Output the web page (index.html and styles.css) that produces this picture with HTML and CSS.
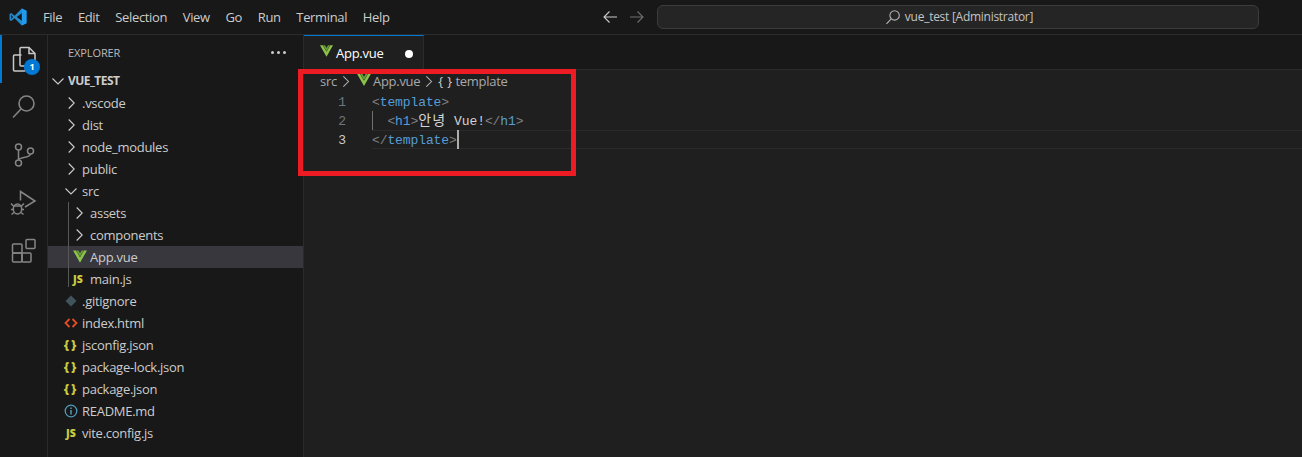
FILE: index.html
```
<!DOCTYPE html>
<html lang="en">
<head>
<meta charset="utf-8">
<title>App.vue - vue_test</title>
<link rel="stylesheet" href="styles.css">
</head>
<body>
<svg width="0" height="0" class="defs">
  <defs>
    <symbol id="vue" viewBox="0 0 16 14"><path d="M0 0h3.400L8 8 12.600 0H16L8 14z" fill="#8bc34a"/><path d="M3.800 0h2.400L8 3.200 9.800 0h2.400L8 7.200z" fill="#689f38"/></symbol>
    <symbol id="chev-r" viewBox="0 0 16 16"><path d="M5.700 2.500 11.200 8l-5.500 5.500" fill="none" stroke="currentColor" stroke-width="1.100"/></symbol>
    <symbol id="chev-d" viewBox="0 0 16 16"><path d="M2.500 5.500 8 11l5.500-5.500" fill="none" stroke="currentColor" stroke-width="1.100"/></symbol>
  </defs>
</svg>
<div class="window">
  <header class="titlebar">
    <svg class="logo" width="18" height="18" viewBox="0 0 100 100"><path d="M71 3 31 43 12 28 3 33v34l9 5 19-15 40 40 26-12V15z" fill="#2489ca"/><path d="M73 28 43 50l30 22z" fill="#161616"/><path d="M71 3 97 15v70L71 97z" fill="#1f9cf0"/><path d="M12 36 22 50 12 64z" fill="#161616"/></svg>
    <nav class="menu">
      <span>File</span><span>Edit</span><span>Selection</span><span>View</span><span>Go</span><span>Run</span><span>Terminal</span><span>Help</span>
    </nav>
    <div class="nav-arrows">
      <svg width="16" height="16" viewBox="0 0 16 16"><path d="M7.500 2.500 2 8l5.500 5.500M2 8h13" fill="none" stroke="#cccccc" stroke-width="1.100"/></svg>
      <svg width="16" height="16" viewBox="0 0 16 16"><path d="M8.500 2.500 14 8l-5.500 5.500M14 8H1" fill="none" stroke="#6e6e6e" stroke-width="1.100"/></svg>
    </div>
    <div class="command">
      <svg width="16" height="16" viewBox="0 0 16 16"><circle cx="9.600" cy="6.400" r="4.700" fill="none" stroke="#b0b0b0" stroke-width="1.100"/><path d="M6.200 9.800 1.500 14.800" stroke="#b0b0b0" stroke-width="1.200"/></svg>
      <span>vue_test [Administrator]</span>
    </div>
  </header>
  <div class="main">
    <aside class="activity">
      <div class="act act-on">
        <svg width="30" height="30" viewBox="0 0 30 30" fill="none" stroke="#c8c8c8" stroke-width="1.500"><path d="M12.500 11H5.500q-1 0-1 1v14q0 1 1 1h10q1 0 1-1v-4"/><path d="M11 4.500q0-1 1-1h8l6 6v11.500q0 1-1 1H12q-1 0-1-1z"/><path d="M20 3.500v6h6"/></svg>
        <span class="badge">1</span>
      </div>
      <div class="act">
        <svg width="26" height="26" viewBox="0 0 26 26" fill="none" stroke="#858585" stroke-width="1.600"><circle cx="15.500" cy="9.500" r="7.500"/><path d="M10 15 2 23.500"/></svg>
      </div>
      <div class="act">
        <svg width="26" height="26" viewBox="0 0 26 26" fill="none" stroke="#858585" stroke-width="1.500"><circle cx="7.500" cy="5" r="3"/><circle cx="7.500" cy="21" r="3"/><circle cx="19.500" cy="9" r="3"/><path d="M7.500 8v10M19.500 12c0 4-12 3-12 6"/></svg>
      </div>
      <div class="act">
        <svg width="28" height="28" viewBox="0 0 28 28" fill="none" stroke="#858585" stroke-width="1.500"><path d="M10.500 11.500V2.500L25 12l-10 6"/><ellipse cx="7.500" cy="20" rx="4.200" ry="5"/><path d="M3.500 17h8M1 14.500l2.500 2.500M14 14.500 11.500 17M1 20.500h2.500M11.500 20.500H14M1.500 25.500l2.500-2M13.500 25.500l-2.500-2"/></svg>
      </div>
      <div class="act">
        <svg width="26" height="26" viewBox="0 0 26 26" fill="none" stroke="#858585" stroke-width="1.500"><rect x="1.500" y="6" width="9.500" height="9" rx="1"/><rect x="1.500" y="15" width="9.500" height="9" rx="1"/><rect x="11" y="15" width="9" height="9" rx="1"/><rect x="15" y="1.500" width="9" height="9" rx="1"/></svg>
      </div>
    </aside>
    <aside class="sidebar">
      <div class="side-head"><span>EXPLORER</span><span class="dots"><i></i><i></i><i></i></span></div>
      <div class="row root"><svg class="tw"><use href="#chev-d"/></svg><b>VUE_TEST</b></div>
      <div class="row"><svg class="tw"><use href="#chev-r"/></svg>.vscode</div>
      <div class="row"><svg class="tw"><use href="#chev-r"/></svg>dist</div>
      <div class="row"><svg class="tw"><use href="#chev-r"/></svg>node_modules</div>
      <div class="row"><svg class="tw"><use href="#chev-r"/></svg>public</div>
      <div class="row"><svg class="tw"><use href="#chev-d"/></svg>src</div>
      <div class="nested">
        <div class="row"><svg class="tw"><use href="#chev-r"/></svg>assets</div>
        <div class="row"><svg class="tw"><use href="#chev-r"/></svg>components</div>
        <div class="row selected"><svg class="tw vue-i"><use href="#vue"/></svg>App.vue</div>
        <div class="row"><span class="fi js">JS</span>main.js</div>
      </div>
      <div class="row"><svg class="tw" viewBox="0 0 16 16"><path d="M2.500 8 8 2.500 13.500 8 8 13.500z" fill="#41535b"/></svg>.gitignore</div>
      <div class="row"><svg class="tw" viewBox="0 0 16 16"><path d="M6.500 4 2.500 8l4 4M9.500 4l4 4-4 4" fill="none" stroke="#e44d26" stroke-width="1.800"/></svg>index.html</div>
      <div class="row"><span class="fi json">{ }</span>jsconfig.json</div>
      <div class="row"><span class="fi json">{ }</span>package-lock.json</div>
      <div class="row"><span class="fi json">{ }</span>package.json</div>
      <div class="row"><svg class="tw" viewBox="0 0 16 16"><circle cx="8" cy="8" r="5.800" fill="none" stroke="#519aba" stroke-width="1.300"/><path d="M8 7v4.500M8 4.500v1.500" stroke="#519aba" stroke-width="1.500"/></svg>README.md</div>
      <div class="row"><span class="fi js">JS</span>vite.config.js</div>
    </aside>
    <section class="editor">
      <div class="tabs">
        <div class="tab"><svg class="tab-vue"><use href="#vue"/></svg><span>App.vue</span><i class="dirty"></i></div>
      </div>
      <div class="crumbs">
        <span>src</span><svg class="cr"><use href="#chev-r"/></svg>
        <svg class="crumb-vue"><use href="#vue"/></svg><span>App.vue</span><svg class="cr"><use href="#chev-r"/></svg>
        <span class="brace">{ }</span><span>template</span>
      </div>
      <div class="code">
        <div class="line"><span class="num">1</span><code><i>&lt;</i><em>template</em><i>&gt;</i></code></div>
        <div class="line"><span class="num">2</span><code class="guide">  <i>&lt;</i><em>h1</em><i>&gt;</i><span class="ko">안녕</span> Vue!<i>&lt;/</i><em>h1</em><i>&gt;</i></code></div>
        <div class="line current"><span class="num">3</span><code><i>&lt;/</i><em>template</em><i>&gt;</i><u class="caret"></u></code></div>
      </div>
      <div class="redbox"></div>
    </section>
  </div>
</div>
</body>
</html>
```

FILE: styles.css
```
* { box-sizing: border-box; }
html, body { margin: 0; height: 100%; background: #181818; overflow: hidden; }
.defs { position: absolute; }
.window { width: 1302px; height: 457px; display: flex; flex-direction: column; color: #cccccc; font: 13px/22px "Open Sans", "Liberation Sans", sans-serif; letter-spacing: -0.27px; }

.titlebar { height: 35px; flex: none; display: flex; align-items: center; background: #181818; border-bottom: 1px solid #2b2b2b; }
.logo { margin-left: 9px; flex: none; }
.menu { display: flex; margin-left: 16px; gap: 15.700px; width: 558px; flex: none; color: #cccccc; font-size: 13px; letter-spacing: -0.35px; }
.nav-arrows { display: flex; gap: 11px; width: 55px; flex: none; margin-left: 1px; }
.command { width: 602px; height: 24px; flex: none; display: flex; align-items: center; justify-content: center; gap: 4px; padding-left: 2px; background: #252525; border: 1px solid #3c3c3c; border-radius: 6px; font-size: 12px; color: #c4c4c4; }

.main { flex: 1; display: flex; min-height: 0; }
.activity { width: 48px; flex: none; border-right: 1px solid #2b2b2b; background: #181818; display: flex; flex-direction: column; }
.act { height: 48px; display: flex; align-items: center; justify-content: center; position: relative; }
.act-on { border-left: 2px solid #0078d4; padding-right: 2px; }
.badge { position: absolute; left: 22px; top: 24px; width: 16px; height: 16px; border-radius: 50%; background: #0078d4; color: #fff; font: 700 9px/16px "Open Sans", sans-serif; text-align: center; letter-spacing: 0; }

.sidebar { width: 256px; flex: none; background: #181818; border-right: 1px solid #2b2b2b; }
.side-head { height: 35px; display: flex; align-items: center; justify-content: space-between; padding: 0 17px 0 20px; font-size: 11px; color: #bbbbbb; letter-spacing: -0.1px; }
.dots { display: flex; gap: 3px; }
.dots i { width: 3px; height: 3px; background: #cccccc; border-radius: 50%; }
.row { height: 22px; display: flex; align-items: center; padding-left: 34px; white-space: pre; color: #cccccc; position: relative; }
.row .tw { position: absolute; left: 15px; top: 3px; width: 16px; height: 16px; color: #cccccc; }
.root { padding-left: 20px; font-size: 12px; }
.root .tw { left: 2px; }
.root b { font-weight: 700; letter-spacing: -0.55px; }
.nested { position: relative; }
.nested::before { content: ""; position: absolute; left: 20px; top: 0; bottom: 3px; width: 1px; background: #585858; z-index: 1; }
.nested .row { padding-left: 42px; }
.nested .tw { left: 23px; }
.nested .fi { left: 22px; }
.nested .row .vue-i { left: 25px; top: 4px; width: 14px; height: 13px; }
.selected { background: #37373d; }
.fi { position: absolute; left: 15px; width: 16px; text-align: center; font-weight: 800; }
.js { color: #cbcb41; font-size: 10.500px; letter-spacing: 0.2px; }
.json { left: 14px; color: #cbcb41; font-size: 12px; letter-spacing: -0.4px; }

.editor { flex: 1; min-width: 0; position: relative; background: #1f1f1f; }
.tabs { height: 35px; background: #181818; border-bottom: 1px solid #2b2b2b; }
.tab { width: 120px; height: 35px; background: #1f1f1f; border-top: 1px solid #0078d4; border-right: 1px solid #2b2b2b; display: flex; align-items: center; padding-left: 16px; color: #ffffff; position: relative; }
.tab-vue { width: 13px; height: 12px; margin: -4px 3px 0 0; flex: none; }
.dirty { position: absolute; left: 101px; top: 14px; width: 8px; height: 8px; border-radius: 50%; background: #fff; }
.crumbs { height: 22px; display: flex; align-items: center; padding-left: 16px; color: #a9a9a9; }
.cr { width: 15px; height: 15px; color: #b5b5b5; flex: none; margin-left: 1px; }
.crumb-vue { width: 14px; height: 12px; margin: -3px 2px 0 4px; flex: none; }
.brace { color: #cccccc; margin: 0 3px 0 2px; letter-spacing: 0.3px; }

.code { font: 13px/21px "Liberation Mono", monospace; letter-spacing: -0.1px; color: #d4d4d4; }
.line { height: 19px; display: flex; position: relative; white-space: pre; }
.num { width: 42px; text-align: right; color: #6e7681; flex: none; }
.code code { margin-left: 26px; font: inherit; flex: 1; }
.code i { font-style: normal; color: #808080; }
.code em { font-style: normal; color: #569cd6; }
.ko { font-family: "Noto Sans CJK KR", sans-serif; font-size: 14px; line-height: 10px; letter-spacing: 1.200px; color: #d4d4d4; }
.guide { border-left: 1px solid #707070; text-indent: -1px; }
.current .num { color: #cccccc; }
.current code { border-top: 1px solid #2b2b2b; border-bottom: 1px solid #2b2b2b; line-height: 19px; }
.caret { display: inline-block; width: 2px; height: 19px; background: #aeafad; vertical-align: top; text-decoration: none; margin-top: -1px; }
.redbox { position: absolute; left: -6px; top: 34px; width: 278px; height: 107px; border: 5px solid #ed1c24; pointer-events: none; }
```
